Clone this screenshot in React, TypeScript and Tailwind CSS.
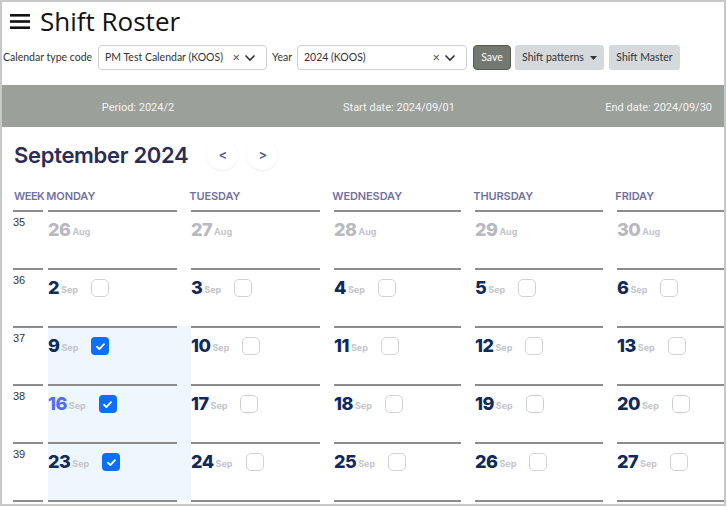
import React from "react";

const navy = "text-[#0f2a5c]";

type Day = { d: number; m: string; past?: boolean; today?: boolean; checked?: boolean; hl?: boolean; box?: boolean };

const weeks: { w: number; days: Day[] }[] = [
  { w: 35, days: [26, 27, 28, 29, 30].map((d) => ({ d, m: "Aug", past: true })) },
  { w: 36, days: [2, 3, 4, 5, 6].map((d) => ({ d, m: "Sep", box: true })) },
  { w: 37, days: [9, 10, 11, 12, 13].map((d, i) => ({ d, m: "Sep", box: true, checked: i === 0, hl: i === 0 })) },
  { w: 38, days: [16, 17, 18, 19, 20].map((d, i) => ({ d, m: "Sep", box: true, checked: i === 0, hl: i === 0, today: i === 0 })) },
  { w: 39, days: [23, 24, 25, 26, 27].map((d, i) => ({ d, m: "Sep", box: true, checked: i === 0, hl: i === 0 })) },
];

function Check({ checked }: { checked?: boolean }) {
  if (checked)
    return (
      <span className="ml-[13px] inline-flex h-[18px] w-[18px] items-center justify-center rounded-[4px] bg-[#0b6efd]">
        <svg width="11" height="11" viewBox="0 0 12 12">
          <path d="M2.2 6.3 L4.8 8.8 L9.8 3.4" fill="none" stroke="white" strokeWidth="2" strokeLinecap="round" strokeLinejoin="round" />
        </svg>
      </span>
    );
  return <span className="ml-[13px] inline-block h-[18px] w-[18px] rounded-[5px] border border-[#d2d2d6] bg-white" />;
}

function Select({ value, w }: { value: string; w: string }) {
  return (
    <div className={`${w} flex h-[25px] items-center rounded-[4px] border border-[#cfcfcf] bg-white pl-[6px] pr-[10px]`}>
      <span className="flex-1 whitespace-nowrap text-[#333]">{value}</span>
      <span className="text-[13px] leading-none text-[#555]">×</span>
      <svg className="ml-[4px]" width="12" height="8" viewBox="0 0 12 8">
        <path d="M1.5 1.5 L6 6 L10.5 1.5" fill="none" stroke="#333" strokeWidth="1.6" />
      </svg>
    </div>
  );
}

export default function App() {
  const cols = [
    { name: "MONDAY", w: "w-[143px]" },
    { name: "TUESDAY", w: "w-[143px]" },
    { name: "WEDNESDAY", w: "w-[141px]" },
    { name: "THURSDAY", w: "w-[142px]" },
    { name: "FRIDAY", w: "w-[143px]" },
  ];
  return (
    <div className="h-[507px] w-[727px] bg-white">
      <div className="h-[506px] w-[726px] overflow-hidden border-2 border-[#c8c8c8] bg-white font-['Open_Sans',sans-serif]">
        {/* title */}
        <div className="flex h-[38px] items-center">
          <svg className="ml-[8px]" width="20" height="18" viewBox="0 0 20 18">
            <rect x="0" y="2" width="20" height="2.6" fill="#111" />
            <rect x="0" y="8.2" width="20" height="2.6" fill="#111" />
            <rect x="0" y="14.4" width="20" height="2.6" fill="#111" />
          </svg>
          <h1 className="ml-[10px] text-[26px] leading-none text-[#111]">Shift Roster</h1>
        </div>
        {/* controls */}
        <div className="mt-[5px] flex h-[25px] items-center whitespace-nowrap font-['Lato',sans-serif] text-[10.5px] text-[#333]">
          <span className="ml-[1px] w-[95px]">Calendar type code</span>
          <Select value="PM Test Calendar (KOOS)" w="w-[169px]" />
          <span className="ml-[5px] w-[25px]">Year</span>
          <Select value="2024 (KOOS)" w="w-[170px]" />
          <button className="ml-[6px] h-[25px] w-[38px] rounded-[4px] border border-[#555a53] bg-[#737870] text-white">Save</button>
          <button className="ml-[4px] flex h-[25px] w-[89px] items-center justify-center gap-[6px] rounded-[3px] bg-[#d6d9dc] text-[#333]">
            Shift patterns
            <svg width="7" height="4" viewBox="0 0 7 4"><path d="M0 0 L7 0 L3.5 4 Z" fill="#333" /></svg>
          </button>
          <button className="ml-[5px] h-[25px] w-[71px] rounded-[3px] bg-[#d6d9dc] text-[#333]">Shift Master</button>
        </div>
        {/* band */}
        <div className="mt-[15px] grid h-[42px] grid-cols-[272px_250px_1fr] items-center bg-[#9ca09a] pt-[4px] font-['Roboto',sans-serif] text-[11px] text-[#f4f4f4]">
          <span className="text-center">Period: 2024/2</span>
          <span className="text-center">Start date: 2024/09/01</span>
          <span className="pr-[12px] text-right">End date: 2024/09/30</span>
        </div>
        {/* calendar */}
        <div className="pl-[11px] pt-[12px] font-['Inter',sans-serif]">
          <div className="flex h-[32px] items-center">
            <h2 className="ml-[1px] text-[22px] font-semibold leading-none tracking-[-0.3px] text-[#2b2d54]">September 2024</h2>
            <button className="ml-[19px] flex h-[30px] w-[31px] items-center justify-center rounded-full bg-white text-[13px] font-semibold text-[#5b5b8c] shadow-[0_1px_2px_rgba(0,0,40,0.08)]">&lt;</button>
            <button className="ml-[9px] flex h-[30px] w-[31px] items-center justify-center rounded-full bg-white text-[13px] font-semibold text-[#5b5b8c] shadow-[0_1px_2px_rgba(0,0,40,0.08)]">&gt;</button>
          </div>
          <div className="mt-[18px] flex h-[21px] items-end whitespace-nowrap pb-[7px] text-[11px] font-semibold leading-[13px] text-[#7272a0]">
            <div className="w-[35px] pl-[1px] tracking-[-0.5px]">WEEK</div>
            {cols.map((c) => (
              <div key={c.name} className={`${c.w} shrink-0 pl-[2px] tracking-[-0.1px]`}>{c.name}</div>
            ))}
          </div>
          {weeks.map((wk) => (
            <div key={wk.w} className="flex h-[58px]">
              <div className="w-[35px] shrink-0">
                <div className="mr-[5px] h-[2px] bg-[#8c8c8c]" />
                <div className="pt-[4px] font-['Liberation_Sans',sans-serif] text-[11px] leading-[13px] text-[#333]">{wk.w}</div>
              </div>
              {wk.days.map((d, i) => (
                <div key={i} className={`${cols[i].w} shrink-0 ${d.hl ? "bg-[#eef6fe]" : ""}`}>
                  <div className="mr-[14px] h-[2px] bg-[#8c8c8c]" />
                  <div className="flex items-center pt-[7px]">
                    <span className={`text-[18px] font-extrabold leading-[22px] tracking-[-0.5px] ${d.past ? "text-[#b8b8c0]" : d.today ? "text-[#4f6df5]" : navy}`}>{d.d}</span>
                    <span className="ml-[2px] mt-[3px] text-[9px] font-bold text-[#c4c4cc]">{d.m}</span>
                    {d.box && <Check checked={d.checked} />}
                  </div>
                </div>
              ))}
            </div>
          ))}
          <div className="flex h-[4px]">
            <div className="w-[35px] shrink-0"><div className="mr-[5px] h-[2px] bg-[#8c8c8c]" /></div>
            {cols.map((c) => (
              <div key={c.name} className={`${c.w} shrink-0`}><div className="mr-[14px] h-[2px] bg-[#8c8c8c]" /></div>
            ))}
          </div>
        </div>
      </div>
    </div>
  );
}
